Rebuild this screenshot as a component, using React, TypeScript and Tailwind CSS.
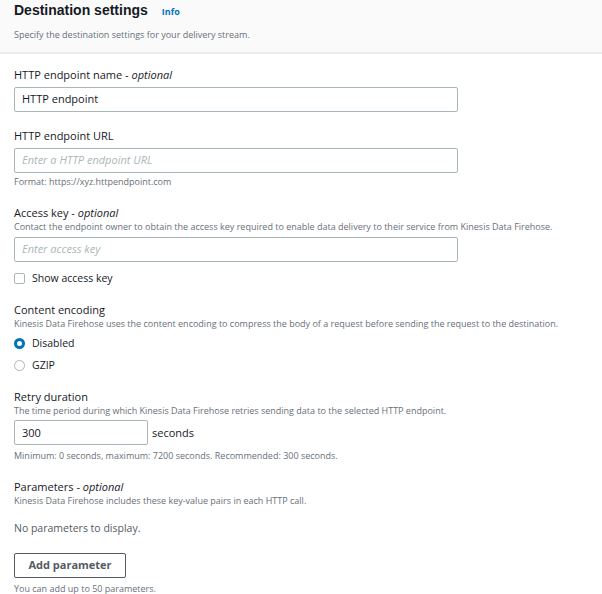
const Label = ({ text, optional }: { text: string; optional?: boolean }) => (
  <div className="text-[11px] leading-[14px] text-[#16191f]">
    {text}
    {optional && (
      <>
        {' - '}
        <i>optional</i>
      </>
    )}
  </div>
);

const Desc = ({ children }: { children: React.ReactNode }) => (
  <div className="text-[9px] leading-[13px] text-[#687078]">{children}</div>
);

const TextInput = ({ value, placeholder, width = 'w-[444px]' }: { value?: string; placeholder?: string; width?: string }) => (
  <div className={`${width} h-[25px] border border-[#aab7b8] rounded-[2px] bg-white flex items-center px-[7px] text-[11px]`}>
    {value ? (
      <span className="text-[#16191f]">{value}</span>
    ) : (
      <span className="italic text-[#aab7b8]">{placeholder}</span>
    )}
  </div>
);

export default function App() {
  return (
    <div className="w-[602px] h-[594px] bg-white overflow-hidden" style={{ fontFamily: '"Open Sans", Arial, sans-serif' }}>
      {/* Header */}
      <div className="bg-[#fafafa] border-b-2 border-[#eaeded] h-[54px] px-[14px]">
        <div className="flex items-baseline gap-[14px]">
          <h2 className="text-[14px] leading-[20px] font-bold text-[#16191f] font-['Liberation_Sans',Arial,sans-serif]">
            Destination settings
          </h2>
          <span className="text-[9px] font-bold text-[#0073bb]">Info</span>
        </div>
        <div className="mt-[9px] text-[9px] leading-[12px] text-[#687078]">
          Specify the destination settings for your delivery stream.
        </div>
      </div>

      <div className="px-[14px] pt-[14px]">
        {/* HTTP endpoint name */}
        <Label text="HTTP endpoint name" optional />
        <div className="mt-[5px]">
          <TextInput value="HTTP endpoint" />
        </div>

        {/* URL */}
        <div className="mt-[17px]">
          <Label text="HTTP endpoint URL" />
        </div>
        <div className="mt-[5px]">
          <TextInput placeholder="Enter a HTTP endpoint URL" />
        </div>
        <div className="mt-[2px]">
          <Desc>Format: https://xyz.httpendpoint.com</Desc>
        </div>

        {/* Access key */}
        <div className="mt-[18px]">
          <Label text="Access key" optional />
          <Desc>
            Contact the endpoint owner to obtain the access key required to enable data delivery to their service from Kinesis Data Firehose.
          </Desc>
        </div>
        <div className="mt-[4px]">
          <TextInput placeholder="Enter access key" />
        </div>
        <label className="mt-[9px] flex items-center gap-[7px]">
          <span className="w-[11px] h-[11px] border border-[#aab7b8] rounded-[2px] bg-white" />
          <span className="text-[10.5px] text-[#16191f]">Show access key</span>
        </label>

        {/* Content encoding */}
        <div className="mt-[16px]">
          <Label text="Content encoding" />
          <Desc>
            Kinesis Data Firehose uses the content encoding to compress the body of a request before sending the request to the destination.
          </Desc>
        </div>
        <div className="mt-[6px] flex flex-col gap-[6px]">
          <div className="flex items-center gap-[7px]">
            <span className="w-[11px] h-[11px] rounded-full border-[3px] border-[#0073bb] bg-white" />
            <span className="text-[10.5px] text-[#16191f]">Disabled</span>
          </div>
          <div className="flex items-center gap-[7px]">
            <span className="w-[11px] h-[11px] rounded-full border border-[#aab7b8] bg-white" />
            <span className="text-[10.5px] text-[#16191f]">GZIP</span>
          </div>
        </div>

        {/* Retry duration */}
        <div className="mt-[17px]">
          <Label text="Retry duration" />
          <Desc>The time period during which Kinesis Data Firehose retries sending data to the selected HTTP endpoint.</Desc>
        </div>
        <div className="mt-[3px] flex items-center gap-[4px]">
          <TextInput value="300" width="w-[134px]" />
          <span className="text-[11px] text-[#16191f]">seconds</span>
        </div>
        <div className="mt-[4px]">
          <Desc>Minimum: 0 seconds, maximum: 7200 seconds. Recommended: 300 seconds.</Desc>
        </div>

        {/* Parameters */}
        <div className="mt-[18px]">
          <Label text="Parameters" optional />
          <Desc>Kinesis Data Firehose includes these key-value pairs in each HTTP call.</Desc>
        </div>
        <div className="mt-[14px] text-[10.5px] text-[#545b64]">No parameters to display.</div>
        <button className="mt-[16px] w-[112px] h-[25px] border border-[#545b64] rounded-[2px] bg-white text-[11px] font-bold text-[#545b64]">
          Add parameter
        </button>
        <div className="mt-[4px]">
          <Desc>You can add up to 50 parameters.</Desc>
        </div>
      </div>
    </div>
  );
}
